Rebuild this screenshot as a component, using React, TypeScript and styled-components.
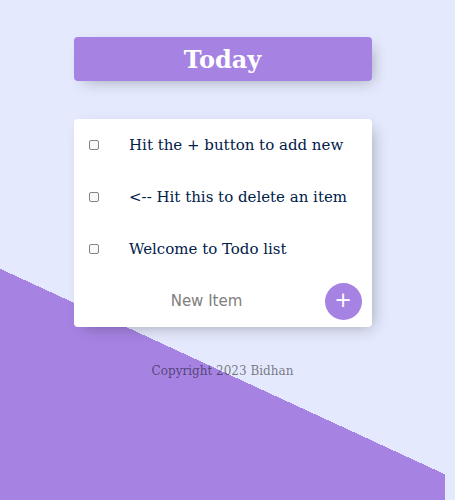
import styled, { createGlobalStyle } from "styled-components";

const items = [
  "Hit the + button to add new",
  "<-- Hit this to delete an item",
  "Welcome to Todo list",
];

const GlobalStyle = createGlobalStyle`
  html, body {
    margin: 0;
    padding: 0;
  }
  body {
    min-height: 500px;
    background-color: #e4e9fd;
    background-image: linear-gradient(24.8deg, #a683e3 50%, #e4e9fd 50%);
    background-size: 445px 743px;
    background-repeat: no-repeat;
    font-family: "DejaVu Serif", serif;
  }
`;

export default function App() {
  return (
    <>
      <GlobalStyle />
      <Page>
        <Heading>
          <h1>Today</h1>
        </Heading>
        <Card>
          {items.map((text, i) => (
            <Item key={i}>
              <Check type="checkbox" />
              <p>{text}</p>
            </Item>
          ))}
          <NewItemForm onSubmit={(e) => e.preventDefault()}>
            <input type="text" placeholder="New Item" autoComplete="off" />
            <AddButton type="submit">+</AddButton>
          </NewItemForm>
        </Card>
        <Footer>Copyright 2023 Bidhan</Footer>
      </Page>
    </>
  );
}

const Page = styled.div`
  width: 445px;
  display: flex;
  flex-direction: column;
  align-items: center;
  padding-top: 37px;
`;

const Heading = styled.div`
  width: 298px;
  height: 44px;
  display: flex;
  align-items: center;
  justify-content: center;
  background-color: #a683e3;
  border-radius: 4px;
  box-shadow: 5px 5px 15px -5px rgba(0, 0, 0, 0.3);

  h1 {
    margin: 0;
    color: #fff;
    font-size: 24px;
    font-weight: bold;
    font-family: "DejaVu Serif", serif;
  }
`;

const Card = styled.div`
  width: 298px;
  margin-top: 38px;
  background: #fff;
  border-radius: 4px;
  box-shadow: 5px 5px 15px -5px rgba(0, 0, 0, 0.3);
`;

const Item = styled.div`
  height: 52px;
  display: flex;
  align-items: center;

  p {
    margin: 0;
    font-size: 15px;
    color: #00204a;
    font-family: "DejaVu Serif", serif;
  }
`;

const Check = styled.input`
  appearance: none;
  box-sizing: border-box;
  width: 10px;
  height: 10px;
  margin: 0 30px 0 15.5px;
  border: 1px solid #858585;
  border-radius: 2px;
  background: #f8f8f8;
`;

const NewItemForm = styled.form`
  height: 52px;
  display: flex;
  align-items: center;
  padding: 0 10px 0 20px;

  input {
    flex: 1;
    min-width: 0;
    height: 40px;
    margin-right: 5px;
    border: none;
    background: transparent;
    text-align: center;
    font-size: 15px;
    font-family: "DejaVu Sans", sans-serif;
    outline: none;

    &::placeholder {
      color: #808080;
      opacity: 1;
    }
  }
`;

const AddButton = styled.button`
  width: 37px;
  height: 37px;
  padding: 0 0 2px;
  border: none;
  border-radius: 50%;
  background-color: #a683e3;
  color: #fff;
  font-size: 21px;
  line-height: 1;
  font-family: "DejaVu Sans", sans-serif;
  display: flex;
  align-items: center;
  justify-content: center;
`;

const Footer = styled.footer`
  margin-top: 37px;
  font-size: 12px;
  color: rgba(0, 0, 0, 0.5);
  font-family: "DejaVu Serif", serif;
`;
